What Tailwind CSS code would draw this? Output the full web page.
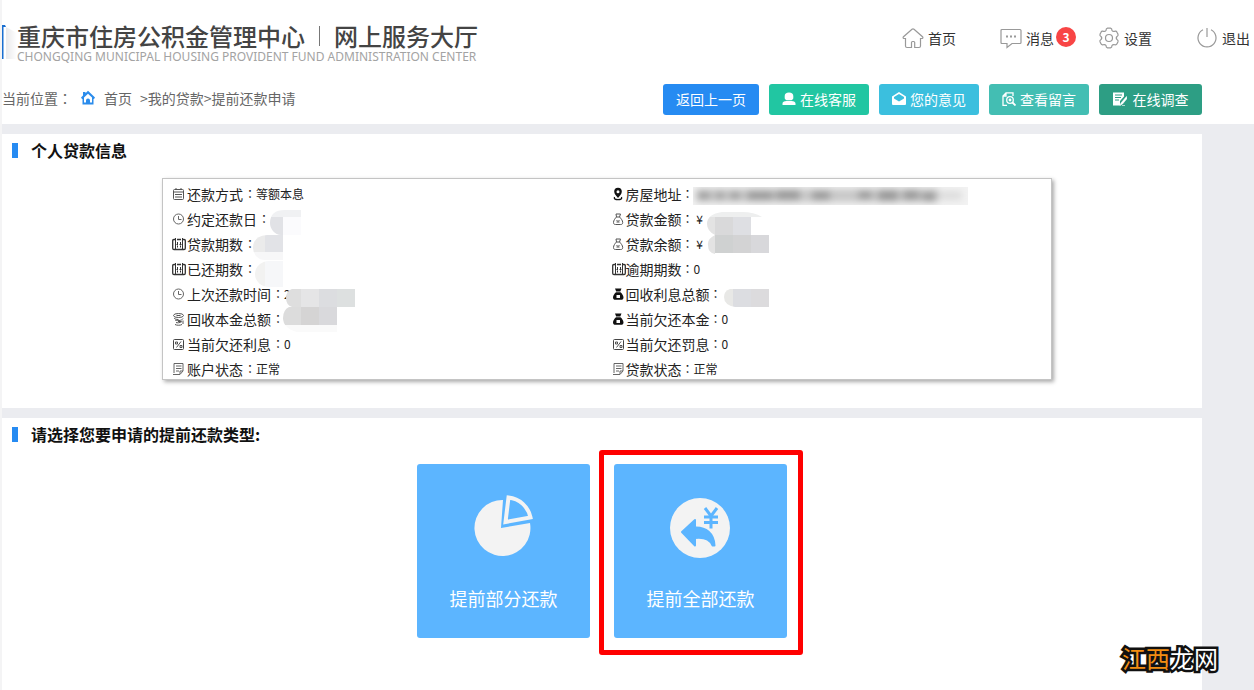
<!DOCTYPE html>
<html lang="zh-CN">
<head>
<meta charset="utf-8">
<title>重庆市住房公积金管理中心</title>
<script src="https://cdn.jsdelivr.net/npm/@tailwindcss/browser@4"></script>
</head>
<body class="relative flex min-h-screen flex-col overflow-x-hidden border-l-2 border-[#f4f4f5] bg-[#ebecf0] font-['Noto_Sans_CJK_SC',sans-serif] text-sm text-[#333]">

<svg class="hidden" aria-hidden="true">
  <symbol id="list" viewBox="0 0 14 14" fill="none" stroke="#555"><rect x="1.5" y="2.5" width="10" height="10" rx="1"/><path d="M1.5 5h10M3 7.5h7M3 10h7M4 1v2M9 1v2"/></symbol>
  <symbol id="clock" viewBox="0 0 14 14" fill="none" stroke="#666"><circle cx="6.5" cy="7" r="5"/><path d="M6.5 4v3.5H9.5"/></symbol>
  <symbol id="cal" viewBox="0 0 14 14" fill="none" stroke="#333"><path d="M3 2.500H2q-1.300 0-1.300 1.300v7.400q0 1.300 1.300 1.300h10q1.300 0 1.300-1.300V3.800q0-1.300-1.300-1.300h-1M5 2.500h4" stroke-width="1.300"/><path d="M3.500 1v11M10.500 1v11"/><path d="M5.500 5v2M8.500 5v2M5.500 8.500v2M8.500 8.500v2M4.500 7.500h1.500M7.500 7.500h2"/></symbol>
  <symbol id="coins" viewBox="0 0 14 14" fill="none" stroke="#555"><ellipse cx="6.500" cy="3.500" rx="5" ry="2"/><path d="M2 6c1 1 2 1.500 4.500 1.500M3 8c1 1 7 1 8-1.500M6 9.500h3M3 12.500c2 1 5 1 7 0M4 10.500c1 .5 4 .5 6-1M11 8.500v3.500M4.500 3.500h4"/></symbol>
  <symbol id="pct" viewBox="0 0 14 14" fill="none" stroke="#444"><rect x="1.500" y="2.500" width="10" height="10" rx="1"/><path d="M9 4.500l-4.500 6M3.500 5h2v2h-2zM8 8.500h2v2H8z" stroke-width=".9"/></symbol>
  <symbol id="note" viewBox="0 0 14 14" fill="none" stroke="#666"><path d="M2 1.500h9v7.500l-3 3.500H3.500M2 1.500v9.500M4 4h5.500M4 6.500h5.500M4 9h3M8 12V9h3M1 12.500h3"/></symbol>
  <symbol id="pin" viewBox="0 0 14 14"><path fill="#111" fill-rule="evenodd" d="M6 .8a3.800 3.800 0 0 0-3.800 3.800C2.200 7 4 8.500 6 11c2-2.500 3.800-4 3.800-6.400A3.800 3.800 0 0 0 6 .8zm0 2.400a1.500 1.500 0 1 1 0 3 1.500 1.500 0 0 1 0-3z"/><path d="M2.500 10c-.8 2 1 2.700 3.500 2.700s4.300-.7 3.500-2.700" fill="none" stroke="#111" stroke-width="1.300"/></symbol>
  <symbol id="bag" viewBox="0 0 14 14" fill="none" stroke="#555"><path d="M4 2h4.500L7.500 5h-3zM4.500 5C3 6.500 1.500 8.500 1.500 10.500c0 1.500.8 2 2 2h5.200c1.200 0 2-.5 2-2C10.700 8.500 9 6.500 7.500 5M4.500 8l1.500 1.500L7.500 8M4.500 10h3"/></symbol>
  <symbol id="bagf" viewBox="0 0 14 14"><path fill="#111" fill-rule="evenodd" d="M3 1.500h6.500L8.300 4.500H4.200zM4 5.200h4.500C10 6.500 11.500 8.500 11.500 10.500c0 1.800-1 2.300-2.300 2.300H3.300C2 12.800 1 12.300 1 10.500c0-2 1.500-4 3-5.300zM4.500 8v3h3.500V8z"/></symbol>
</svg>

<header class="bg-white pb-[9px]">
  <div class="flex h-[84px] items-start justify-between pr-1">
    <div class="flex">
      <svg class="mt-[25px] h-9 w-[15px]" viewBox="0 0 15 36" aria-hidden="true">
        <defs><linearGradient id="fade"><stop offset="0" stop-color="#e9e9eb"/><stop offset="1" stop-color="#fff"/></linearGradient></defs>
        <path d="M4 2l11 6v26H4z" fill="url(#fade)"/><path d="M0 0h3l1 2H1.500v32H0z" fill="#1a6fd0"/>
      </svg>
      <div class="pt-[22px]">
        <h1 class="flex items-center gap-3.5 text-2xl leading-7 font-medium text-[#444]"><span>重庆市住房公积金管理中心</span><span class="h-5 w-px bg-[#777]"></span><span>网上服务大厅</span></h1>
        <p class="font-['Noto_Sans',sans-serif] text-xs leading-[14px] whitespace-nowrap text-[#a3a3a3]">CHONGQING MUNICIPAL HOUSING PROVIDENT FUND ADMINISTRATION CENTER</p>
      </div>
    </div>
    <nav class="flex gap-11 pt-[27px]">
      <a href="#" class="flex items-center gap-1"><svg class="size-[22px]" viewBox="0 0 22 22" fill="none" stroke="#999" stroke-width="1.200"><path d="M3.500 11.500H2q-1.500-.5-.5-1.800L10 2.200q1-.8 2 0l8.500 7.500q1 1.300-.5 1.800h-1.500M3.500 11v8q0 1.500 1.500 1.500h4.500v-5q0-1 1-1h1.200q1 0 1 1v5H17q1.500 0 1.500-1.500v-8"/></svg>首页</a>
      <a href="#" class="relative flex items-center gap-1"><svg class="size-[22px]" viewBox="0 0 22 22" fill="none" stroke="#999" stroke-width="1.200"><path d="M2 2.500h18q1 0 1 1v12q0 1-1 1h-8L7 20.500v-4H2q-1 0-1-1v-12q0-1 1-1z"/><path d="M6 9.500h2M10 9.500h2M14 9.500h2" stroke-width="1.800"/></svg>消息<span class="absolute top-0 left-14 flex size-5 items-center justify-center rounded-full bg-[#f84545] text-xs font-bold text-white">3</span></a>
      <a href="#" class="flex items-center gap-1"><svg class="size-[22px]" viewBox="0 0 22 22" fill="none" stroke="#999" stroke-width="1.200"><circle cx="11" cy="11" r="3.500"/><path d="M8 3.500Q8 1.500 9.500 1.200h3Q14 1.500 14 3.500q1 1.500 3 .7 1.500-.2 2 1l1 2q.5 1.500-1 2.300-1.500 1.500 0 3 1.500.8 1 2.300l-1 2q-.5 1.200-2 1-2-.8-3 .7 0 2-1.500 2.300h-3Q8 20.500 8 18.500q-1-1.500-3-.7-1.500.2-2-1l-1-2q-.5-1.500 1-2.300 1.500-1.500 0-3-1.500-.8-1-2.300l1-2q.5-1.200 2-1 2 .8 3-.7z"/></svg>设置</a>
      <a href="#" class="flex items-center gap-1"><svg class="size-[22px]" viewBox="0 0 22 22" fill="none" stroke="#999" stroke-width="1.200"><path d="M11 1v9M7 2.800a9 9 0 1 0 8 0"/></svg>退出</a>
    </nav>
  </div>
  <div class="flex items-center justify-between pr-[52px]">
    <div class="flex items-center pb-[3px] text-[#666]">
      <span lang="zh-Hant" class="font-['Noto_Sans_CJK_TC',sans-serif]">当前位置：</span>
      <svg class="mr-2 ml-2 size-4" viewBox="0 0 16 16" aria-hidden="true"><path fill="#2b8cec" fill-rule="evenodd" d="M8 .8l7 6.700-1 1.500h-.5v5.500h-11V9H2L1 7.500 3 5.500V2h2.500v1.200zM8 3.800L4 7.500v5h2v-2a2 2 0 0 1 4 0v2h2v-5z"/></svg>
      <a href="#">首页</a><span class="pl-2">&gt;<a href="#">我的贷款</a>&gt;<a href="#">提前还款申请</a></span>
    </div>
    <div class="flex gap-2.5 text-white *:h-[31px] *:rounded-[3px] *:pb-0.5">
      <button class="w-24 bg-[#268bf2]">返回上一页</button>
      <button class="flex w-[100px] items-center justify-center gap-1 bg-[#21c6a2]"><svg class="size-3.5" viewBox="0 0 14 14" fill="#fff"><path d="M7 .5c2.800 0 4.300 1.300 4.300 3.500v2c0 1-.8 1.800-1.800 2.300h-5C3.500 7.800 2.700 7 2.700 6V4C2.700 1.800 4.200.5 7 .5zM.5 13v-1.500c0-1.500 1.500-2.300 4-2.500h5c2.500.2 4 1 4 2.500V13z"/></svg>在线客服</button>
      <button class="flex w-[100px] items-center justify-center gap-1 bg-[#3bbfde]"><svg class="size-3.5" viewBox="0 0 14 14"><path fill="#fff" fill-rule="evenodd" d="M7 0l7 4.500V12q0 1-1 1H1q-1 0-1-1V4.500zM2 5v1.500L7 9.500l5-3V5L7 2z"/></svg>您的意见</button>
      <button class="flex w-[100px] items-center justify-center gap-1 bg-[#43beb3]"><svg class="size-3.5" viewBox="0 0 14 14" fill="none" stroke="#fff" stroke-width="1.300"><path d="M5 13.300H1V4l3-3.200h7V4M1 4h3V1"/><circle cx="8" cy="8" r="3.300"/><circle cx="8" cy="8" r=".8"/><path d="M10.500 10.500l3 3" stroke-width="1.800"/></svg>查看留言</button>
      <button class="flex w-[103px] items-center justify-center gap-1.5 bg-[#2d9e84]"><svg class="size-3.5" viewBox="0 0 14 14"><path fill="#fff" d="M0 .5h11v4L7 9v4.500H0z"/><path d="M2 3h7M2 5.500h6M2 8h4" stroke="#2d9e84"/><path d="M13.500 4.500L8 11l-1 2.500L9.500 12 14 6.500zM9 13.500h3" fill="#fff" stroke="#fff" stroke-width=".6"/></svg>在线调查</button>
    </div>
  </div>
</header>

<main class="mt-2.5 mr-[52px] flex grow flex-col gap-2.5">
  <section class="bg-white pb-7">
    <h2 class="flex h-[34px] items-center gap-[13px] pb-0.5 pl-2.5 text-base font-bold text-[#111]"><span class="h-[15px] w-1.5 bg-[#268bf2]"></span>个人贷款信息</h2>
    <div class="relative mt-2.5 mr-[150px] ml-40 grid grid-cols-2 border border-[#c4c4c4] bg-white pt-0.5 pl-[9px] text-[#222] shadow-[2px_2px_4px_#aaa]">
      <ul class="*:flex *:h-[25px] *:items-center *:gap-px">
        <li><svg class="size-3.5"><use href="#list"/></svg>还款方式<span lang="zh-Hant" class="font-['Noto_Sans_CJK_TC',sans-serif] text-xs">：等额本息</span></li>
        <li><svg class="size-3.5"><use href="#clock"/></svg>约定还款日<span lang="zh-Hant" class="font-['Noto_Sans_CJK_TC',sans-serif] text-xs">：</span></li>
        <li><svg class="size-3.5"><use href="#cal"/></svg>贷款期数<span lang="zh-Hant" class="font-['Noto_Sans_CJK_TC',sans-serif] text-xs">：</span></li>
        <li><svg class="size-3.5"><use href="#cal"/></svg>已还期数<span lang="zh-Hant" class="font-['Noto_Sans_CJK_TC',sans-serif] text-xs">：</span></li>
        <li><svg class="size-3.5"><use href="#clock"/></svg>上次还款时间<span lang="zh-Hant" class="font-['Noto_Sans_CJK_TC',sans-serif] text-xs">：2</span></li>
        <li><svg class="size-3.5"><use href="#coins"/></svg>回收本金总额<span lang="zh-Hant" class="font-['Noto_Sans_CJK_TC',sans-serif] text-xs">：</span></li>
        <li><svg class="size-3.5"><use href="#pct"/></svg>当前欠还利息<span lang="zh-Hant" class="font-['Noto_Sans_CJK_TC',sans-serif] text-xs">：0</span></li>
        <li class="-mb-0.5"><svg class="size-3.5"><use href="#note"/></svg>账户状态<span lang="zh-Hant" class="font-['Noto_Sans_CJK_TC',sans-serif] text-xs">：正常</span></li>
      </ul>
      <ul class="*:flex *:h-[25px] *:items-center">
        <li><svg class="size-3.5"><use href="#pin"/></svg>房屋地址<span lang="zh-Hant" class="font-['Noto_Sans_CJK_TC',sans-serif] text-xs">：</span></li>
        <li><svg class="size-3.5"><use href="#bag"/></svg>贷款金额<span lang="zh-Hant" class="font-['Noto_Sans_CJK_TC',sans-serif] text-xs">： ¥</span></li>
        <li><svg class="size-3.5"><use href="#bag"/></svg>贷款余额<span lang="zh-Hant" class="font-['Noto_Sans_CJK_TC',sans-serif] text-xs">： ¥</span></li>
        <li><svg class="size-3.5"><use href="#cal"/></svg>逾期期数<span lang="zh-Hant" class="font-['Noto_Sans_CJK_TC',sans-serif] text-xs">：0</span></li>
        <li><svg class="size-3.5"><use href="#bagf"/></svg>回收利息总额<span lang="zh-Hant" class="font-['Noto_Sans_CJK_TC',sans-serif] text-xs">：</span></li>
        <li><svg class="size-3.5"><use href="#bagf"/></svg>当前欠还本金<span lang="zh-Hant" class="font-['Noto_Sans_CJK_TC',sans-serif] text-xs">：0</span></li>
        <li><svg class="size-3.5"><use href="#pct"/></svg>当前欠还罚息<span lang="zh-Hant" class="font-['Noto_Sans_CJK_TC',sans-serif] text-xs">：0</span></li>
        <li class="-mb-0.5"><svg class="size-3.5"><use href="#note"/></svg>贷款状态<span lang="zh-Hant" class="font-['Noto_Sans_CJK_TC',sans-serif] text-xs">：正常</span></li>
      </ul>
      <!-- Redaction over private values -->
      <svg class="pointer-events-none absolute top-0 left-0 h-[160px] w-[820px]" viewBox="163 179 820 160" aria-hidden="true">
        <defs>
          <filter id="soft" x="-5%" y="-50%" width="110%" height="200%"><feGaussianBlur stdDeviation="3.5"/></filter>
          <clipPath id="a"><path d="M301 210v25h-20a12 12 0 0 1-11-12q0-13 15-13z"/></clipPath>
          <clipPath id="b"><path d="M283 235v25h-18a12 12 0 0 1-12-12q0-12 14-13z"/></clipPath>
          <clipPath id="c"><path d="M283 261v26h-14a14 13 0 0 1 0-26z"/></clipPath>
          <clipPath id="d"><path d="M355 289v18h-63q-6-2-6-9t6-9z"/></clipPath>
          <clipPath id="e"><path d="M337 307v25h-40q-14-4-14-14 0-8 6-11z"/></clipPath>
          <clipPath id="f"><path d="M762 217q-8-5-20-5h-20q-15 2-15 12 0 7 8 11-8 4-7 10 0 8 7 9l54-1v-18h-18v-18z"/></clipPath>
          <clipPath id="g"><path d="M769 289v18h-34q-11-2-11-10 0-6 6-8z"/></clipPath>
          <clipPath id="h"><path d="M693 187h275v18H693z"/></clipPath>
        </defs>
        <g clip-path="url(#a)"><path fill="#f0f1f3" d="M269 210h32v7h-32z"/><path fill="#e1e2e6" d="M269 217h14v18h-14z"/><path fill="#fbfbfd" d="M283 217h18v18h-18z"/></g>
        <g clip-path="url(#b)"><path fill="#ebebeb" d="M253 235h12v17h-12z"/><path fill="#e2e3e7" d="M265 235h18v17h-18z"/><path fill="#f7f7f8" d="M253 252h30v8h-30z"/></g>
        <g clip-path="url(#c)"><path fill="#f2f2f1" d="M255 261h10v26h-10z"/><path fill="#f6f7f9" d="M265 261h18v26h-18z"/></g>
        <g clip-path="url(#d)"><path fill="#dedede" d="M286 289h15v18h-15z"/><path fill="#e5e5e6" d="M301 289h18v18h-18z"/><path fill="#dcdde0" d="M319 289h18v18h-18z"/><path fill="#dde0e0" d="M337 289h18v18h-18z"/></g>
        <g clip-path="url(#e)"><path fill="#fafafa" d="M283 325h54v7h-54z"/><path fill="#dcdcdc" d="M283 307h18v18h-18z"/><path fill="#d5d4d4" d="M301 307h18v18h-18z"/><path fill="#d9d9dc" d="M319 307h18v18h-18z"/></g>
        <g clip-path="url(#f)"><path fill="#eeefef" d="M707 212h55v5h-55z"/><path fill="#e3e3e3" d="M707 217h8v37h-8z"/><path fill="#d9d9da" d="M715 217h18v18h-18z"/><path fill="#dedfe3" d="M733 217h18v18h-18z"/><path fill="#cfd1d1" d="M715 235h18v18h-18z"/><path fill="#d3d3d4" d="M733 235h18v18h-18z"/><path fill="#d8d8db" d="M751 235h18v18h-18z"/></g>
        <g clip-path="url(#g)"><path fill="#e8e8e6" d="M724 289h9v18h-9z"/><path fill="#dcdde1" d="M733 289h18v18h-18z"/><path fill="#dcdbdd" d="M751 289h18v18h-18z"/></g>
        <path fill="#f2f2f2" d="M693 187h275v18H693z"/>
        <g clip-path="url(#h)"><g filter="url(#soft)" fill="#999"><path fill="#c8c8c8" d="M696 189h242v13H696z"/><path fill="#ddd" d="M938 191h24v9h-24z"/><path d="M698 192h12v7h-12zM716 192h8v7h-8zM730 192h10v7h-10zM747 191h26v9h-26zM776 190h24v10h-24zM812 191h18v9h-18zM858 191h14v8h-14zM878 190h20v11h-20zM903 190h16v10h-16zM922 192h14v9h-14z"/></g></g>
      </svg>
    </div>
  </section>

  <section class="grow bg-white pb-[52px]">
    <h2 class="flex h-[34px] items-center gap-[13px] pb-0.5 pl-2.5 text-base font-bold text-[#111]"><span class="h-[15px] w-1.5 bg-[#268bf2]"></span>请选择您要申请的提前还款类型:</h2>
    <div class="mt-3 flex justify-center gap-6 text-lg text-white">
      <button class="flex h-[174px] w-[173px] flex-col items-center gap-[26px] rounded-[3px] bg-[#5cb5ff] pt-[30px]">
        <svg class="size-16" viewBox="0 0 64 64" aria-hidden="true"><path fill="#f3f3f3" d="M31 6A28 28 0 1 0 58 29L29 34z"/><path fill="none" stroke="#f3f3f3" stroke-width="4" d="M36.500 3.500A25 25 0 0 1 58.500 23.500L33.500 28z"/></svg>
        提前部分还款
      </button>
      <button class="relative flex h-[174px] w-[173px] flex-col items-center gap-[26px] rounded-[3px] bg-[#5cb5ff] pt-[30px]">
        <svg class="size-16" viewBox="0 0 64 64" aria-hidden="true"><circle cx="31" cy="34" r="30" fill="#f3f3f3"/><path fill="#5cb5ff" stroke="#5cb5ff" stroke-width="2" stroke-linejoin="round" d="M13 38l13-12v7.500c11-.5 19 6 19.500 18h-2C41 45 35 43 26 44v7.500z"/><path fill="none" stroke="#5cb5ff" stroke-width="3" d="M36 14l6 8 6-8M35 23h14M35 28.500h14M42 22v12.500"/></svg>
        提前全部还款
        <span class="absolute -top-3.5 -right-4 -bottom-[17px] -left-[15px] rounded-[3px] border-5 border-[#ff0000]"></span>
      </button>
    </div>
  </section>
</main>

<div class="absolute right-9 bottom-4 text-2xl leading-8 text-white [-webkit-text-stroke:5px_#111] [paint-order:stroke_fill]"><span class="text-[#f38d12]">江西</span>龙网</div>
</body>
</html>
